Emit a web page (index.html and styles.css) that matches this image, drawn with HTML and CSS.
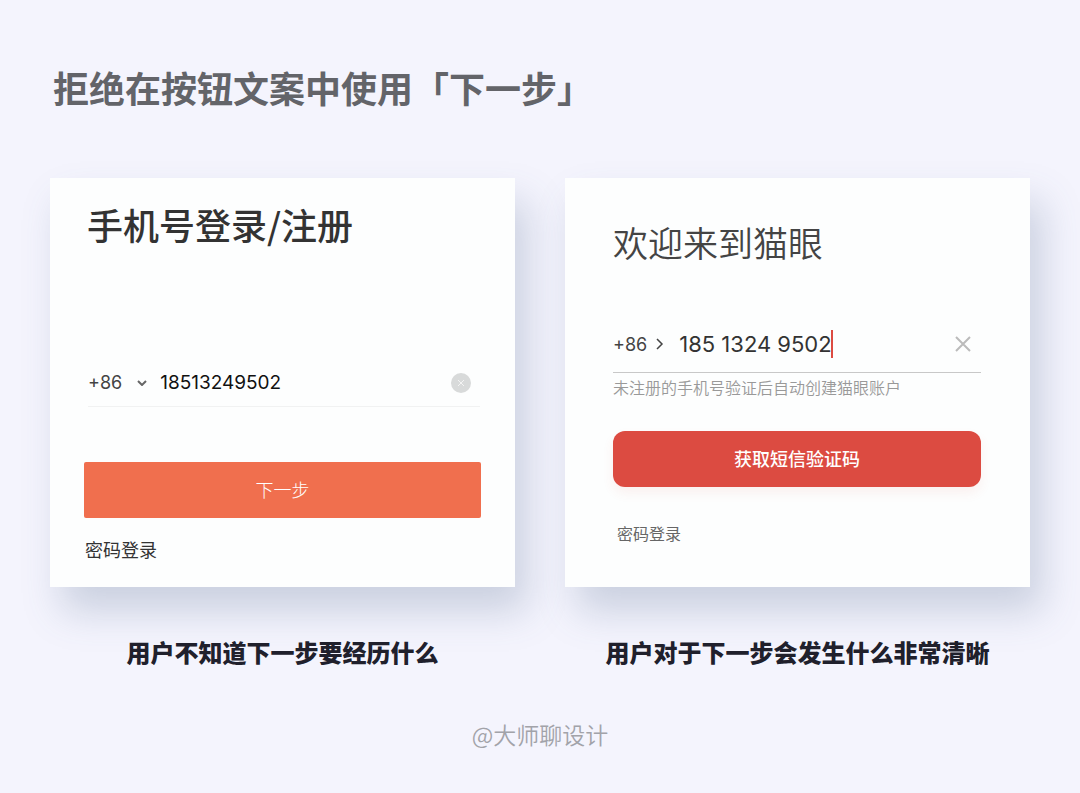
FILE: index.html
```html
<!DOCTYPE html>
<html lang="zh-CN">
<head>
  <meta charset="UTF-8">
  <meta name="viewport" content="width=device-width, initial-scale=1">
  <title>拒绝在按钮文案中使用「下一步」</title>
  <link rel="stylesheet" href="styles.css">
</head>
<body>

  <header>
    <h1>拒绝在按钮文案中使用「下一步」</h1>
  </header>

  <main class="compare">
    <!-- 反例 -->
    <figure>
      <form class="card card-before">
        <h2>手机号登录/注册</h2>
        <div class="field">
          <button type="button" class="code">+86
            <svg width="10" height="6" viewBox="0 0 10 6"><path d="M1 1l4 4 4-4"/></svg>
          </button>
          <input type="tel" value="18513249502" aria-label="手机号">
          <button type="button" class="clear" aria-label="清除">
            <svg width="20" height="20" viewBox="0 0 20 20"><circle cx="10" cy="10" r="10"/><path d="M7 7l6 6M13 7l-6 6"/></svg>
          </button>
        </div>
        <button type="button" class="submit">下一步</button>
        <a href="#" class="password">密码登录</a>
      </form>
      <figcaption>用户不知道下一步要经历什么</figcaption>
    </figure>

    <!-- 正例 -->
    <figure>
      <form class="card card-after">
        <h2>欢迎来到猫眼</h2>
        <div class="field">
          <button type="button" class="code">+86
            <svg width="8" height="12" viewBox="0 0 8 12"><path d="M1 1l5 5-5 5"/></svg>
          </button>
          <input type="tel" value="185 1324 9502" aria-label="手机号">
          <span class="caret"></span>
          <button type="button" class="clear" aria-label="清除">
            <svg width="16" height="16" viewBox="0 0 16 16"><path d="M1 1l14 14M15 1L1 15"/></svg>
          </button>
        </div>
        <p class="hint">未注册的手机号验证后自动创建猫眼账户</p>
        <button type="button" class="submit">获取短信验证码</button>
        <a href="#" class="password">密码登录</a>
      </form>
      <figcaption>用户对于下一步会发生什么非常清晰</figcaption>
    </figure>
  </main>

  <footer>@大师聊设计</footer>

</body>
</html>
```
FILE: styles.css
```css
/* Reset */
* { margin: 0; padding: 0; box-sizing: border-box; }
body {
  font-family: "Noto Sans CJK SC", sans-serif;
  background-color: #f4f4fd;
  color: #333;
}
button, input { font: inherit; color: inherit; background: none; border: none; outline: none; }
button { cursor: pointer; }
a { color: inherit; text-decoration: none; }
svg { display: block; fill: none; stroke: currentColor; }

/* 标题 */
header { padding: 60px 53px 0; }
h1 {
  font-size: 36px;
  line-height: 54px;
  font-weight: 700;
  color: #636469;
}

/* 左右对比 */
.compare {
  display: grid;
  grid-template-columns: 1fr 1fr;
  gap: 50px;
  padding: 64px 50px 0;
}
figure { display: flex; flex-direction: column; }
figcaption {
  margin-top: 47px;
  font-size: 24px;
  line-height: 36px;
  font-weight: 900;
  text-align: center;
  color: #20202c;
}

/* 卡片 */
.card {
  display: flex;
  flex-direction: column;
  flex: 1;
  background-color: #fdfefe;
  box-shadow: 12px 24px 36px rgba(80, 105, 140, 0.25);
}
.field { display: flex; align-items: center; }
.field input { font-family: Inter, sans-serif; field-sizing: content; }
.code {
  display: flex;
  align-items: center;
  font-family: Inter, sans-serif;
  font-size: 18px;
  color: #444;
}
.code svg { stroke-width: 2; }
.clear { margin-left: auto; }
.submit {
  height: 56px;
  padding-bottom: 2px;
  font-size: 18px;
  color: #fff;
}
.password { align-self: flex-start; }

/* 左侧卡片 */
.card-before { padding: 19px 34px 24px; }
.card-before h2 {
  padding-left: 3px;
  font-size: 36px;
  line-height: 54px;
  font-weight: 500;
}
.card-before .field {
  height: 48px;
  margin: 108px 1px 0 4px;
  padding-right: 9px;
  border-bottom: 1px solid #f1f2f2;
}
.card-before .code { gap: 15px; }
.card-before .code svg { color: #666; }
.card-before input {
  margin-left: 13px;
  font-size: 19px;
  color: #111;
}
.card-before .clear circle { fill: #d8dada; stroke: none; }
.card-before .clear path { stroke: #f4f4f4; stroke-width: 1; }
.card-before .submit {
  margin-top: 55px;
  border-radius: 2px;
  background-color: #f06f4e;
  font-weight: 300;
}
.card-before .password {
  margin: 17px 0 0 1px;
  font-size: 18px;
  line-height: 28px;
}

/* 右侧卡片 */
.card-after { padding: 37px 49px 38px 48px; }
.card-after h2 {
  font-size: 35px;
  line-height: 54px;
  font-weight: 350;
  color: #444;
}
.card-after .field {
  height: 57px;
  margin-top: 47px;
  padding-right: 10px;
  border-bottom: 1px solid #c8c8c8;
}
.card-after .code { gap: 9px; }
.card-after .code svg { stroke-width: 1.5; }
.card-after input {
  margin-left: 15px;
  font-size: 22px;
}
.caret {
  width: 2px;
  height: 28px;
  margin-left: -1px;
  background-color: #dc4b41;
}
.card-after .clear { color: #bbb; }
.card-after .clear path { stroke-width: 2; }
.hint {
  margin-top: 2px;
  font-size: 16px;
  line-height: 24px;
  font-weight: 350;
  color: #999;
}
.card-after .submit {
  margin-top: 32px;
  border-radius: 12px;
  background-color: #dc4b41;
  box-shadow: 0 6px 12px rgba(220, 75, 65, 0.08);
  font-weight: 500;
}
.card-after .password {
  margin: 34px 0 0 4px;
  font-size: 16px;
  line-height: 24px;
  color: #666;
}

footer {
  padding: 46px 0 40px;
  font-size: 23px;
  line-height: 36px;
  font-weight: 350;
  text-align: center;
  color: #a2a3a9;
}
```
